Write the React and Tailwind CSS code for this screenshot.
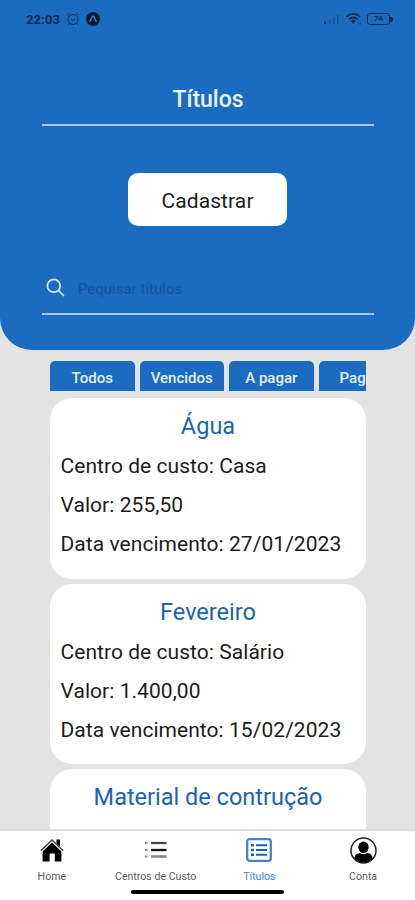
import React from 'react';

const tabs = ['Todos', 'Vencidos', 'A pagar', 'Pagos'];

const bills = [
    { id: 1, name: 'Água', center: 'Casa', value: '255,50', due: '27/01/2023' },
    { id: 2, name: 'Fevereiro', center: 'Salário', value: '1.400,00', due: '15/02/2023' },
    { id: 3, name: 'Material de contrução', center: 'Casa' },
];

const App = () => {
    return (
        <div className="h-[900px] w-full flex flex-col overflow-hidden bg-[#e3e3e3] font-['Roboto',sans-serif] text-[#1c1c1c]">
            {/* Header */}
            <header className="h-[350px] shrink-0 rounded-b-[32px] bg-[#1b6cc0] flex flex-col">
                <StatusBar />

                <div className="ml-[42px] mr-[41px] mt-[36px] h-[52px] flex items-center justify-center border-b-2 border-[#a9c8ea]">
                    <h1 className="text-[23px] font-medium leading-none text-[#eaf2fc]">Títulos</h1>
                </div>

                <button className="mt-[47px] w-[159px] h-[53px] pt-[3px] shrink-0 self-center rounded-[10px] bg-white text-[21px] tracking-[0.1px] leading-none">
                    Cadastrar
                </button>

                <div className="ml-[42px] mr-[41px] mt-[36px] h-[53px] flex items-center border-b-2 border-[#a9c8ea] pl-1">
                    <svg width="19" height="19" viewBox="0 0 19 19" fill="none" stroke="#dbe8f8" strokeWidth="1.7" strokeLinecap="round">
                        <circle cx="7.8" cy="7.8" r="6.4" />
                        <path d="M12.5 12.5 17.5 17.5" />
                    </svg>
                    <span className="ml-[13px] pt-[4px] text-[15px] leading-none text-[#155399]">Pequisar títulos</span>
                </div>
            </header>

            {/* Bills */}
            <main className="mx-[50px] w-[316px] flex-1 min-h-0 flex flex-col overflow-hidden pt-[11px]">
                <div className="flex gap-[5px] shrink-0 overflow-hidden">
                    {tabs.map((tab) => (
                        <button
                            key={tab}
                            className="w-[84.5px] h-[30px] pt-[5px] shrink-0 rounded-t-[5px] bg-[#1b6cc0] text-[15px] font-medium leading-none text-[#e6effa]"
                        >
                            {tab}
                        </button>
                    ))}
                </div>

                <div className="mt-[7px] flex flex-col gap-[5px]">
                    {bills.map((bill) => (
                        <BillCard key={bill.id} bill={bill} />
                    ))}
                </div>
            </main>

            <TabBar />
        </div>
    );
};

const StatusBar = () => (
    <div className="h-[38px] shrink-0 flex items-center justify-between pl-[26px] pr-[22px] text-[#0b2a50]">
        <div className="flex items-center gap-[6px]">
            <span className="text-[13px] font-bold leading-none tracking-[0.1px]">22:03</span>
            <svg width="14" height="14" viewBox="0 0 14 14" fill="none" stroke="currentColor" strokeWidth="1">
                <circle cx="7" cy="7.5" r="5" />
                <path d="M1 3.2 3.4 1M13 3.2 10.6 1M5 7l2 1.6L9.4 6.4M3.4 11.4l-1.2 1.4M10.6 11.4l1.2 1.4" />
            </svg>
            <svg width="14" height="14" viewBox="0 0 14 14">
                <circle cx="7" cy="7" r="7" fill="#081a30" />
                <path d="M3.6 9.8C5 8 5.8 4 7 4s2 4 3.4 5.8" fill="none" stroke="#4e86c4" strokeWidth="1.5" />
            </svg>
        </div>
        <div className="flex items-center gap-[5px]">
            <svg width="17" height="12" viewBox="0 0 17 12" fill="currentColor">
                <path d="M1 8.5h2V11H1z" />
                <path d="M6 6.5h1.4V11H6zM10 4.5h1.4V11H10zM14 2h1.4v9H14z" opacity=".45" />
            </svg>
            <svg width="17" height="14" viewBox="0 0 17 14" fill="none" stroke="currentColor" strokeWidth="1.7">
                <path d="M1.3 4.8C5.2 1 11.3 1 15.2 4.8M3.8 7.5c2.5-2.4 6.4-2.4 8.9 0" />
                <path d="M5.8 9.2 8.25 12l2.45-2.8a3.5 3.5 0 0 0-4.9 0z" fill="currentColor" stroke="none" />
                <path d="M13.5 10v3M15.5 10v3" strokeWidth=".7" opacity=".7" />
            </svg>
            <div className="flex items-center">
                <div className="w-[23px] h-[12px] rounded-[3px] border-[1.5px] border-[#0b2a50] flex items-center justify-center text-[8px] font-medium leading-none">
                    74
                </div>
                <div className="w-[3px] h-[5px] rounded-r-full bg-[#0b2a50]" />
            </div>
        </div>
    </div>
);

const BillCard = ({ bill }) => (
    <article className="h-[180.5px] shrink-0 rounded-[22px] bg-white px-[10.5px] pt-[14px]">
        <h2 className="h-[29px] text-center text-[23.5px] leading-[29px] text-[#1b63b5]">{bill.name}</h2>
        <div className="mt-[6px] text-[21px] leading-[39px] tracking-[0.05px] whitespace-nowrap">
            <p>Centro de custo: {bill.center}</p>
            {bill.value && <p>Valor: {bill.value}</p>}
            {bill.due && <p>Data vencimento: {bill.due}</p>}
        </div>
    </article>
);

const TabBar = () => (
    <nav className="h-[71px] shrink-0 bg-white border-t-2 border-[#dedede] flex flex-col justify-between">
        <div className="grid grid-cols-4 pt-[6px] text-[10.6px] text-[#5c5c5c]">
            <TabItem label="Home">
                <svg width="24" height="24" viewBox="0 0 24 24">
                    <path d="M.8 12.8 12 2l11.2 10.8" fill="none" stroke="#444" strokeWidth="1.5" />
                    <path d="M16.5 1.5H20v7l-3.5-3.3z" />
                    <path d="M2.6 13.5 12 4.6l9.4 8.9V23.5h-6.6v-8H9.600v8h-7z" />
                </svg>
            </TabItem>
            <TabItem label="Centros de Custo">
                <svg width="22" height="18" viewBox="0 0 22 18">
                    <path d="M0 2h2.5M0 9h2.5M0 15.5h2.5" stroke="#888" strokeWidth="1.8" />
                    <path d="M6 2h15.5" stroke="#444" strokeWidth="2.3" />
                    <path d="M6 9h15.5" stroke="#111" strokeWidth="2.3" />
                    <path d="M6 15.5h15.5" stroke="#888" strokeWidth="2.6" />
                </svg>
            </TabItem>
            <TabItem label="Títulos" active>
                <svg width="26" height="24" viewBox="0 0 26 24" fill="none" stroke="#1b63b5">
                    <rect x="1.2" y="1.2" width="23.6" height="21.6" rx="2.5" stroke="#4a82c8" strokeWidth="2.3" />
                    <path d="M10 7.3h11M10 12h11M10 16.7h11" strokeWidth="2" />
                    <path d="M5 7.3h3M5 12h3M5 16.7h3" strokeWidth="2.4" />
                </svg>
            </TabItem>
            <TabItem label="Conta">
                <svg width="27" height="27" viewBox="0 0 27 27">
                    <clipPath id="avatar">
                        <circle cx="13.5" cy="13.5" r="12" />
                    </clipPath>
                    <circle cx="13.5" cy="13.5" r="12.5" fill="none" stroke="#222" strokeWidth="1.5" />
                    <g clipPath="url(#avatar)">
                        <ellipse cx="13.5" cy="10.3" rx="5.2" ry="5.8" />
                        <path d="M4.2 22.500c.3-4.500 2-6.300 5.800-6.500 2 1.600 5 1.600 7 0 3.800.2 5.500 2 5.800 6.500L18 27H9z" />
                    </g>
                </svg>
            </TabItem>
        </div>
        <div className="mb-[6px] w-[153px] h-[4px] self-center rounded-full bg-black" />
    </nav>
);

const TabItem = ({ label, active, children }) => (
    <div className="flex flex-col items-center">
        <div className="h-[26px] flex items-center">{children}</div>
        <span className={active ? 'mt-[7px] leading-[13px] text-[#3b82dc]' : 'mt-[7px] leading-[13px]'}>{label}</span>
    </div>
);

export default App;
